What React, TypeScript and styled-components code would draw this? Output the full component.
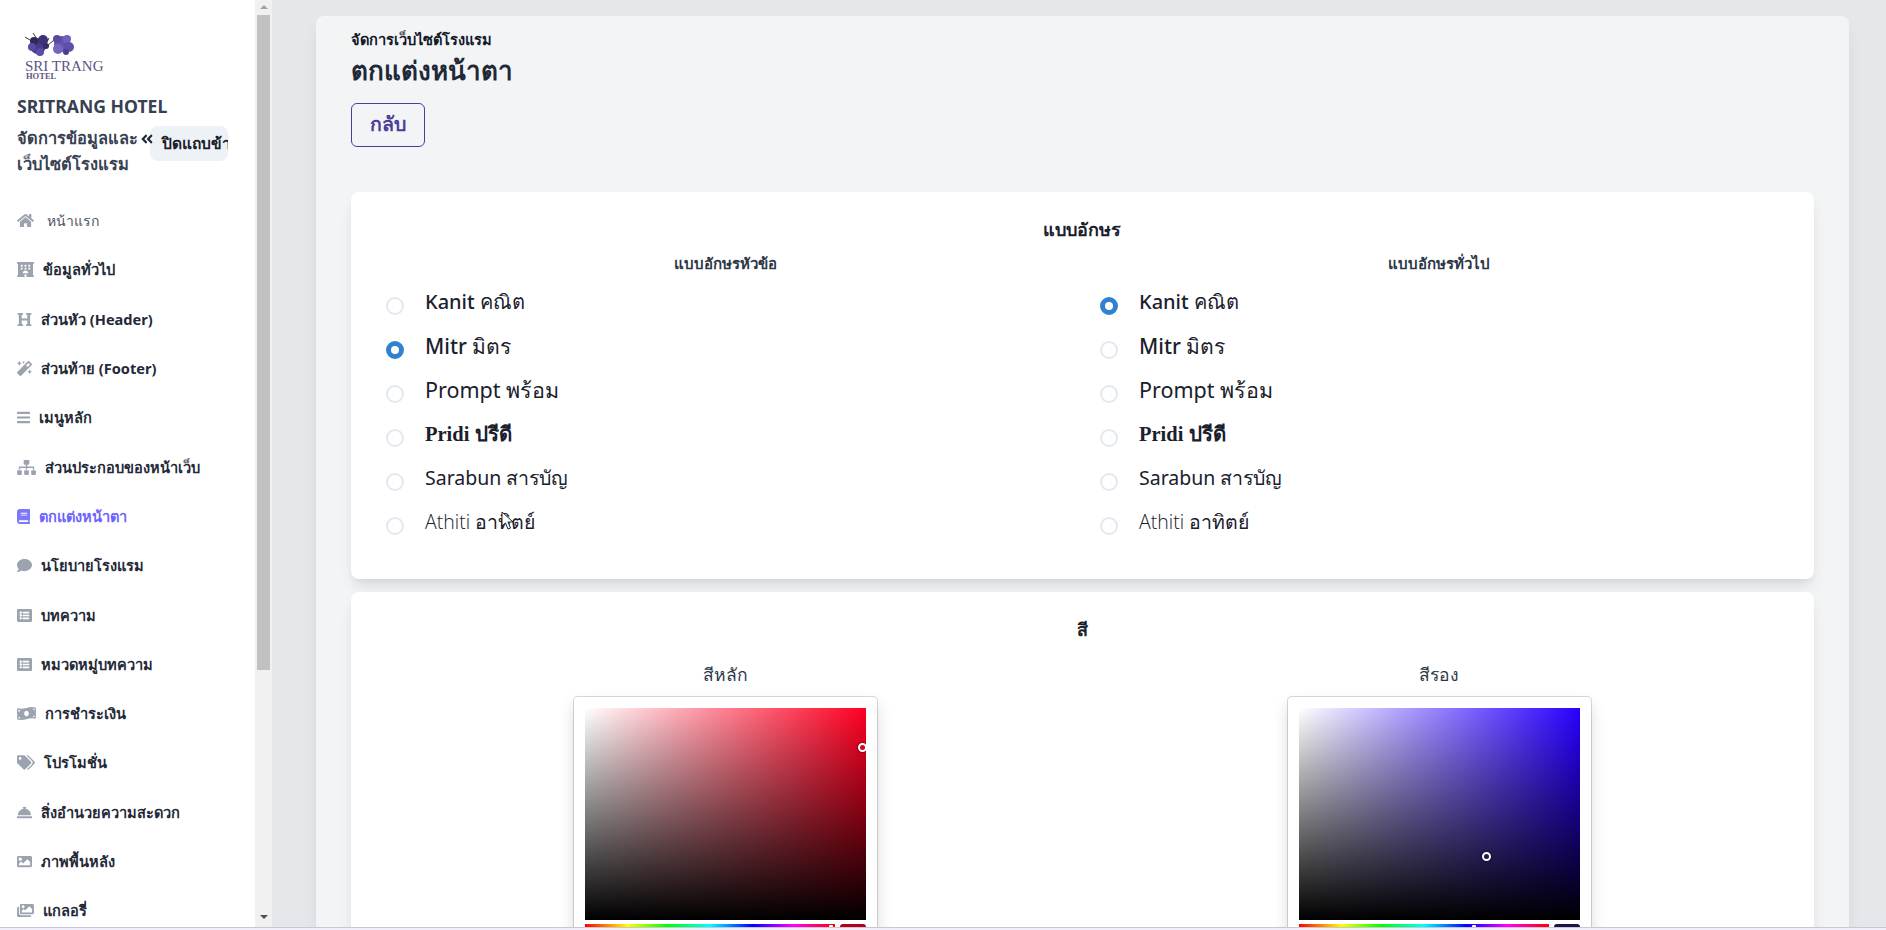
import { useState } from "react";
import styled, { createGlobalStyle } from "styled-components";
import {
  FaAngleDoubleLeft,
  FaBars,
  FaBook,
  FaComment,
  FaConciergeBell,
  FaHeading,
  FaHome,
  FaHotel,
  FaImage,
  FaImages,
  FaListAlt,
  FaMagic,
  FaMoneyBillWave,
  FaSitemap,
  FaTags,
} from "react-icons/fa";

const sans = `"Noto Sans", Inter, "Liberation Sans", sans-serif`;

const GlobalStyle = createGlobalStyle`
  html, body {
    margin: 0;
    height: 100%;
    overflow: hidden;
    font-family: ${sans};
    background: #e5e7eb;
  }
  * {
    box-sizing: border-box;
  }
`;

const menu = [
  { label: "หน้าแรก", icon: FaHome, width: 17, plain: true },
  { label: "ข้อมูลทั่วไป", icon: FaHotel, width: 17 },
  { label: "ส่วนหัว (Header)", icon: FaHeading, width: 15 },
  { label: "ส่วนท้าย (Footer)", icon: FaMagic, width: 15 },
  { label: "เมนูหลัก", icon: FaBars, width: 13 },
  { label: "ส่วนประกอบของหน้าเว็บ", icon: FaSitemap, width: 19 },
  { label: "ตกแต่งหน้าตา", icon: FaBook, width: 13, active: true },
  { label: "นโยบายโรงแรม", icon: FaComment, width: 15 },
  { label: "บทความ", icon: FaListAlt, width: 15 },
  { label: "หมวดหมู่บทความ", icon: FaListAlt, width: 15 },
  { label: "การชำระเงิน", icon: FaMoneyBillWave, width: 19 },
  { label: "โปรโมชั่น", icon: FaTags, width: 18 },
  { label: "สิ่งอำนวยความสะดวก", icon: FaConciergeBell, width: 15 },
  { label: "ภาพพื้นหลัง", icon: FaImage, width: 15 },
  { label: "แกลอรี่", icon: FaImages, width: 17 },
];

const fonts = [
  { label: "Kanit คณิต", family: `"Noto Sans", sans-serif`, weight: 500, size: 20 },
  { label: "Mitr มิตร", family: `"Noto Sans", sans-serif`, weight: 500, size: 21 },
  { label: "Prompt พร้อม", family: `"Noto Sans", sans-serif`, weight: 400, size: 21.5 },
  { label: "Pridi ปรีดี", family: `"Liberation Serif", serif`, weight: 700, size: 20.5 },
  { label: "Sarabun สารบัญ", family: `"Noto Sans", sans-serif`, weight: 400, size: 19.5 },
  { label: "Athiti อาทิตย์", family: `"Open Sans", sans-serif`, weight: 300, size: 19.5 },
];

const petals = [
  [13, 14, 8, "#4a3a8c"],
  [9, 9, 4, "#2f2a55"],
  [18, 8, 5, "#3f3274"],
  [7, 15, 4, "#5a4aa6"],
  [15, 20, 4, "#5b4aa8"],
  [21, 14, 3, "#352c66"],
  [37, 12, 8, "#6552ae"],
  [32, 7, 4, "#5b4aa0"],
  [42, 7, 4, "#7261bb"],
  [44, 15, 5, "#5f4eaa"],
  [33, 17, 5, "#7664c0"],
  [41, 20, 3, "#4d3f90"],
] as const;

export default function App() {
  const [headingFont, setHeadingFont] = useState(1);
  const [bodyFont, setBodyFont] = useState(0);

  return (
    <Shell>
      <GlobalStyle />
      <Sidebar>
        <SidebarBody>
          <Logo>
            <svg width="52" height="24" viewBox="0 0 52 24">
              <path d="M0 5 L10 11 M22 14 L29 8 M8 1 L12 7 M24 6 L21 12" stroke="#3a3a3a" strokeWidth="1" fill="none" />
              {petals.map(([cx, cy, r, fill]) => (
                <circle key={`${cx}-${cy}`} cx={cx} cy={cy} r={r} fill={fill} />
              ))}
            </svg>
            <LogoName>SRI TRANG</LogoName>
            <LogoSub>HOTEL</LogoSub>
          </Logo>
          <BrandTitle>SRITRANG HOTEL</BrandTitle>
          <BrandRow>
            <BrandText>
              จัดการข้อมูลและ
              <br />
              เว็บไซต์โรงแรม
            </BrandText>
            <Chevrons>
              <FaAngleDoubleLeft />
            </Chevrons>
            <CloseTab>ปิดแถบข้าง</CloseTab>
          </BrandRow>
          <nav>
            {menu.map((item) => (
              <NavItem key={item.label} $active={item.active} $plain={item.plain} $iconWidth={item.width}>
                <item.icon />
                <span>{item.label}</span>
              </NavItem>
            ))}
          </nav>
        </SidebarBody>
        <ScrollRail>
          <ArrowUp />
          <ScrollThumb />
          <ArrowDown />
        </ScrollRail>
      </Sidebar>

      <Main>
        <Panel>
          <Crumb>จัดการเว็บไซต์โรงแรม</Crumb>
          <PageTitle>ตกแต่งหน้าตา</PageTitle>
          <BackButton>กลับ</BackButton>

          <Card>
            <CardTitle>แบบอักษร</CardTitle>
            <Columns>
              <FontColumn
                title="แบบอักษรหัวข้อ"
                selected={headingFont}
                onSelect={setHeadingFont}
              />
              <FontColumn
                title="แบบอักษรทั่วไป"
                selected={bodyFont}
                onSelect={setBodyFont}
              />
            </Columns>
            <Cursor width="14" height="20" viewBox="0 0 14 20">
              <path d="M1 1 L1 15 L4.5 12 L7 18 L9.5 17 L7 11 L12 11 Z" fill="#fff" stroke="#222" strokeWidth="1" />
            </Cursor>
          </Card>

          <ColorCard>
            <ColorTitle>สี</ColorTitle>
            <Columns>
              <ColorColumn title="สีหลัก" hue="#ff0022" swatch="#b5001b" markerX={278} markerY={39} hueX={246} />
              <ColorColumn title="สีรอง" hue="#2800ff" swatch="#1b1446" markerX={188} markerY={148} hueX={175} />
            </Columns>
          </ColorCard>
        </Panel>
      </Main>
      <BottomEdge />
    </Shell>
  );
}

function FontColumn({
  title,
  selected,
  onSelect,
}: {
  title: string;
  selected: number;
  onSelect: (i: number) => void;
}) {
  return (
    <div>
      <ColumnTitle>{title}</ColumnTitle>
      <FontList>
        {fonts.map((f, i) => (
          <FontRow key={f.label} onClick={() => onSelect(i)}>
            <Radio $on={selected === i} />
            <FontName $family={f.family} $weight={f.weight} $size={f.size}>
              {f.label}
            </FontName>
          </FontRow>
        ))}
      </FontList>
    </div>
  );
}

function ColorColumn({
  title,
  hue,
  swatch,
  markerX,
  markerY,
  hueX,
}: {
  title: string;
  hue: string;
  swatch: string;
  markerX: number;
  markerY: number;
  hueX: number;
}) {
  return (
    <PickerColumn>
      <PickerLabel>{title}</PickerLabel>
      <Picker>
        <Saturation $hue={hue}>
          <SatMarker $x={markerX} $y={markerY} />
        </Saturation>
        <PickerControls>
          <HueBar>
            <HueMarker $x={hueX} />
          </HueBar>
          <Swatch $color={swatch} />
        </PickerControls>
      </Picker>
    </PickerColumn>
  );
}

const Shell = styled.div`
  display: flex;
  height: 930px;
  overflow: hidden;
  position: relative;
`;

const Sidebar = styled.aside`
  flex: 0 0 272px;
  display: flex;
  height: 927px;
`;

const SidebarBody = styled.div`
  flex: 1;
  min-width: 0;
  background: #fff;
  padding: 32px 0 0 17px;
  overflow: hidden;
`;

const ScrollRail = styled.div`
  flex: 0 0 17px;
  display: flex;
  flex-direction: column;
  align-items: center;
  background: #f1f1f1;
`;

const ArrowUp = styled.span`
  flex: none;
  margin: 5px 0 6px;
  border-left: 4px solid transparent;
  border-right: 4px solid transparent;
  border-bottom: 4px solid #a3a3a3;
`;

const ScrollThumb = styled.div`
  flex: none;
  width: 13px;
  height: 655px;
  background: #c1c1c1;
`;

const ArrowDown = styled.span`
  flex: none;
  margin-top: auto;
  margin-bottom: 8px;
  border-left: 4px solid transparent;
  border-right: 4px solid transparent;
  border-top: 4px solid #505050;
`;

const Logo = styled.div`
  display: flex;
  flex-direction: column;
  align-items: flex-start;
  padding-left: 8px;
  height: 48px;
`;

const LogoName = styled.div`
  font-family: "Liberation Serif", serif;
  font-size: 15px;
  line-height: 14px;
  margin-top: 3px;
  color: #5c5580;
  white-space: nowrap;
`;

const LogoSub = styled.div`
  font-family: "Liberation Serif", serif;
  font-size: 8.5px;
  line-height: 7px;
  font-weight: 700;
  color: #5c5580;
  padding-left: 1px;
`;

const BrandTitle = styled.div`
  margin-top: 13px;
  font-size: 17.6px;
  line-height: 26px;
  font-weight: 700;
  color: #374151;
`;

const BrandRow = styled.div`
  display: flex;
  align-items: flex-start;
  margin-top: 6px;
  height: 71px;
`;

const BrandText = styled.div`
  width: 122px;
  font-size: 16.4px;
  line-height: 26px;
  font-weight: 600;
  color: #374151;
  flex: none;
  white-space: nowrap;
`;

const Chevrons = styled.span`
  position: relative;
  z-index: 1;
  flex: none;
  width: 13px;
  margin: 6px -3px 0 1px;
  font-size: 14px;
  color: #1f2937;
`;

const CloseTab = styled.div`
  flex: none;
  width: 78px;
  height: 35px;
  margin-top: 1px;
  padding-left: 12px;
  border-radius: 8px;
  background: #edf2f7;
  color: #1a202c;
  font-size: 15.5px;
  font-weight: 600;
  line-height: 35px;
  white-space: nowrap;
  overflow: hidden;
`;

const NavItem = styled.a<{ $active?: boolean; $plain?: boolean; $iconWidth: number }>`
  display: flex;
  align-items: center;
  gap: ${(p) => (p.$plain ? 13 : 9)}px;
  height: 49.3px;
  font-size: ${(p) => (p.$plain ? 14 : 14.6)}px;
  font-weight: ${(p) => (p.$plain ? 400 : 700)};
  color: ${(p) => (p.$active ? "#6c63ff" : p.$plain ? "#4b5563" : "#1f2937")};
  white-space: nowrap;
  svg {
    flex: none;
    width: ${(p) => p.$iconWidth}px;
    height: 15px;
    color: ${(p) => (p.$active ? "#7c78f8" : "#9ca3af")};
  }
`;

const Main = styled.main`
  flex: 1;
  min-width: 0;
  padding: 16px 37px 0 44px;
`;

const Panel = styled.section`
  background: #f3f4f6;
  border-radius: 8px 8px 0 0;
  padding: 13px 35px 0;
  box-shadow: 0 10px 15px -3px rgba(0, 0, 0, 0.1);
  height: 914px;
`;

const Crumb = styled.div`
  font-size: 14.6px;
  line-height: 20px;
  font-weight: 600;
  color: #111827;
`;

const PageTitle = styled.h1`
  margin: 3px 0 0;
  font-size: 26px;
  line-height: 36px;
  font-weight: 700;
  color: #1f2937;
`;

const BackButton = styled.button`
  display: block;
  margin-top: 15px;
  width: 74px;
  height: 44px;
  padding: 0 0 2px;
  border: 1px solid #4c3d9a;
  border-radius: 6px;
  background: transparent;
  color: #4c3d9a;
  font-family: inherit;
  font-size: 19.5px;
  font-weight: 600;
`;

const Card = styled.div`
  position: relative;
  margin-top: 45px;
  height: 387px;
  padding: 24px 18px 0 17px;
  background: #fff;
  border-radius: 8px;
  box-shadow: 0 10px 15px -3px rgba(0, 0, 0, 0.1), 0 4px 6px -2px rgba(0, 0, 0, 0.05);
`;

const ColorCard = styled(Card)`
  margin-top: 13px;
  height: 400px;
`;

const CardTitle = styled.div`
  text-align: center;
  font-size: 18px;
  line-height: 26px;
  font-weight: 600;
  color: #1a202c;
`;

const ColorTitle = styled(CardTitle)`
  margin-bottom: 20px;
`;

const Columns = styled.div`
  display: grid;
  grid-template-columns: 1fr 1fr;
`;

const ColumnTitle = styled.div`
  margin-top: 11px;
  text-align: center;
  font-size: 15px;
  line-height: 20px;
  font-weight: 600;
  color: #2d3748;
`;

const FontList = styled.div`
  margin-top: 8px;
  padding-left: 18px;
`;

const FontRow = styled.label`
  display: flex;
  align-items: center;
  gap: 21px;
  height: 44px;
`;

const Radio = styled.span<{ $on?: boolean }>`
  flex: none;
  width: 18px;
  height: 18px;
  margin-top: 6px;
  border-radius: 50%;
  border: ${(p) => (p.$on ? "5px solid #3182ce" : "2px solid #e2e8f0")};
  background: #fff;
`;

const FontName = styled.span<{ $family: string; $weight: number; $size: number }>`
  font-family: ${(p) => p.$family};
  font-weight: ${(p) => p.$weight};
  font-size: ${(p) => p.$size}px;
  line-height: 28px;
  color: #1a202c;
  margin-top: -3px;
`;

const Cursor = styled.svg`
  position: absolute;
  left: 150px;
  top: 319px;
`;

const PickerColumn = styled.div`
  display: flex;
  flex-direction: column;
  align-items: center;
`;

const PickerLabel = styled.div`
  font-size: 17.5px;
  line-height: 24px;
  color: #2d3748;
`;

const Picker = styled.div`
  margin-top: 11px;
  width: 303px;
  padding: 11px;
  background: #fff;
  border-radius: 4px;
  box-shadow: 0 0 0 1px rgba(0, 0, 0, 0.15), 0 8px 16px rgba(0, 0, 0, 0.15);
`;

const Saturation = styled.div<{ $hue: string }>`
  position: relative;
  height: 212px;
  background:
    linear-gradient(to top, #000, rgba(0, 0, 0, 0)),
    linear-gradient(to right, #fff, rgba(255, 255, 255, 0)),
    ${(p) => p.$hue};
  overflow: hidden;
`;

const SatMarker = styled.span<{ $x: number; $y: number }>`
  position: absolute;
  left: ${(p) => p.$x - 4.5}px;
  top: ${(p) => p.$y - 4.5}px;
  width: 9px;
  height: 9px;
  border-radius: 50%;
  border: 2px solid #fff;
  box-shadow: 0 0 1px 1px rgba(0, 0, 0, 0.3);
`;

const PickerControls = styled.div`
  display: flex;
  gap: 5px;
  margin-top: 4px;
  height: 24px;
`;

const HueBar = styled.div`
  position: relative;
  flex: 1;
  height: 10px;
  background: linear-gradient(to right, #f00 0%, #ff0 17%, #0f0 33%, #0ff 50%, #00f 67%, #f0f 83%, #f00 100%);
`;

const HueMarker = styled.span<{ $x: number }>`
  position: absolute;
  left: ${(p) => p.$x - 2}px;
  top: 1px;
  width: 4px;
  height: 8px;
  background: #fff;
  border-radius: 1px;
`;

const Swatch = styled.div<{ $color: string }>`
  flex: none;
  width: 26px;
  height: 24px;
  border-radius: 3px;
  background: ${(p) => p.$color};
`;

const BottomEdge = styled.div`
  position: absolute;
  left: 0;
  right: 0;
  bottom: 0;
  height: 3px;
  background: #f0eef8;
  border-top: 1px solid #c9c6d8;
`;
